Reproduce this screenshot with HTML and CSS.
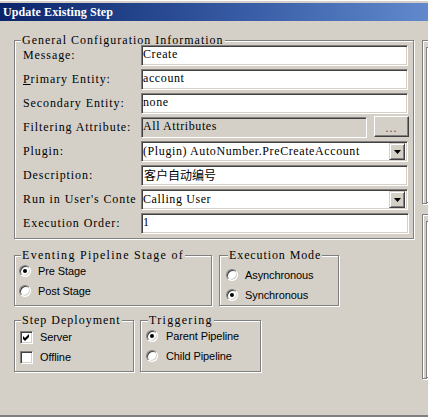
FILE: index.html
```html
<!DOCTYPE html>
<html>
<head>
<meta charset="utf-8">
<title>Update Existing Step</title>
<link rel="stylesheet" href="styles.css">
</head>
<body>
<div class="window">
  <div class="titlebar">Update Existing Step</div>
  <div class="main">
    <div class="left">
      <fieldset class="group general">
        <legend>General Configuration Information</legend>
        <div class="form">
          <div class="row"><div class="label">Message:</div><div class="field">Create</div></div>
          <div class="row"><div class="label"><span class="u">P</span>rimary Entity:</div><div class="field">account</div></div>
          <div class="row"><div class="label">Secondary Entity:</div><div class="field">none</div></div>
          <div class="row"><div class="label">Filtering Attribute:</div>
            <div class="field-pair"><div class="field disabled">All Attributes</div><div class="btn">...</div></div>
          </div>
          <div class="row"><div class="label">Plugin:</div>
            <div class="field combo"><span class="combo-text">(Plugin) AutoNumber.PreCreateAccount</span><span class="drop"><svg width="7" height="4" viewBox="0 0 7 4"><polygon points="0,0 7,0 3.5,4" fill="#000"/></svg></span></div>
          </div>
          <div class="row"><div class="label">Description:</div><div class="field cjk">客户自动编号</div></div>
          <div class="row"><div class="label">Run in User's Conte</div>
            <div class="field combo"><span class="combo-text">Calling User</span><span class="drop"><svg width="7" height="4" viewBox="0 0 7 4"><polygon points="0,0 7,0 3.5,4" fill="#000"/></svg></span></div>
          </div>
          <div class="row"><div class="label">Execution Order:</div><div class="field wide">1</div></div>
        </div>
      </fieldset>

      <div class="group-row first">
        <fieldset class="group stage">
          <legend>Eventing Pipeline Stage of</legend>
          <div class="opt"><span class="radio checked"></span><span>Pre Stage</span></div>
          <div class="opt"><span class="radio"></span><span>Post Stage</span></div>
        </fieldset>
        <fieldset class="group mode">
          <legend>Execution Mode</legend>
          <div class="opt"><span class="radio"></span><span>Asynchronous</span></div>
          <div class="opt"><span class="radio checked"></span><span>Synchronous</span></div>
        </fieldset>
      </div>

      <div class="group-row second">
        <fieldset class="group deploy">
          <legend>Step Deployment</legend>
          <div class="opt"><span class="check"><svg width="7" height="7" viewBox="0 0 7 7"><path d="M0 2 L2 4 L6 0 L6 3 L2 7 L0 5 Z" fill="#000"/></svg></span><span>Server</span></div>
          <div class="opt"><span class="check"></span><span>Offline</span></div>
        </fieldset>
        <fieldset class="group trig">
          <legend>Triggering</legend>
          <div class="opt"><span class="radio checked"></span><span>Parent Pipeline</span></div>
          <div class="opt"><span class="radio"></span><span>Child Pipeline</span></div>
        </fieldset>
      </div>
    </div>
    <div class="right">
      <div class="panel p1"><div class="panel-inner"></div></div>
      <div class="panel p2"><div class="panel-inner"></div></div>
    </div>
  </div>
  <div class="footer"></div>
</div>
</body>
</html>
```
FILE: styles.css
```css
* { box-sizing: border-box; }
html, body { margin: 0; padding: 0; }
body {
  width: 428px;
  height: 417px;
  overflow: hidden;
  background: #d4d0c8;
  font-family: "Liberation Serif", "Times New Roman", serif;
  font-size: 12px;
  letter-spacing: 1px;
  color: #000;
}
.window {
  height: 417px;
  display: flex;
  flex-direction: column;
  border-top: 1px solid #fff;
  padding-top: 2px;
}
.titlebar {
  flex: none;
  height: 18px;
  line-height: 18px;
  padding-left: 3px;
  background: linear-gradient(to right, #0a246a 0%, #3a5fa8 60%, #6189cc 100%);
  color: #fff;
  font-weight: bold;
  font-size: 12px;
  letter-spacing: 0.1px;
  white-space: nowrap;
}
.main {
  flex: 1;
  display: flex;
  gap: 8px;
  padding: 13px 0 0 14px;
  overflow: hidden;
}
.left {
  flex: none;
  width: 400px;
  display: flex;
  flex-direction: column;
}
.group {
  margin: 0;
  min-width: 0;
  border: 1px solid #808080;
  box-shadow: inset 1px 1px #fff, 1px 1px #fff;
}
.group legend {
  margin-left: -2px;
  padding: 0 1px;
  line-height: 12px;
  background: #d4d0c8;
  white-space: nowrap;
}
.general {
  width: 400px;
  padding: 0 5px 4px 8px;
}
.form {
  display: flex;
  flex-direction: column;
  gap: 3px;
  margin-top: -1px;
}
.row {
  display: flex;
  height: 21px;
}
.label {
  flex: none;
  width: 118px;
  line-height: 21px;
  white-space: nowrap;
  overflow: hidden;
  letter-spacing: 0.9px;
}
.u { text-decoration: underline; }
.field {
  flex: 1;
  height: 21px;
  line-height: 17px;
  padding-left: 1px;
  background: #fff;
  border: 1px solid;
  border-color: #808080 #fff #fff #808080;
  box-shadow: inset 1px 1px #404040, inset -1px -1px #d4d0c8;
  white-space: nowrap;
  overflow: hidden;
  letter-spacing: 0.6px;
}
.field.wide { margin-right: -1px; }
.field.cjk {
  font-family: "Noto Sans CJK SC", sans-serif;
  letter-spacing: 0;
  padding-left: 2px;
}
.field-pair {
  flex: 1;
  display: flex;
  gap: 7px;
}
.field.disabled {
  flex: none;
  width: 226px;
  background: #d4d0c8;
}
.btn {
  flex: 1;
  margin-right: -1px;
  margin-top: -1px;
  height: 21px;
  border: 1px solid;
  border-color: #fff #404040 #404040 #fff;
  box-shadow: inset -1px -1px #808080;
  text-align: center;
  line-height: 22px;
  color: #555;
  letter-spacing: 1px;
}
.combo {
  display: flex;
  align-items: center;
  padding-right: 2px;
}
.combo-text { flex: 1; overflow: hidden; }
.drop {
  flex: none;
  width: 16px;
  height: 17px;
  display: flex;
  align-items: center;
  justify-content: center;
  background: #d4d0c8;
  border: 1px solid;
  border-color: #d4d0c8 #404040 #404040 #d4d0c8;
  box-shadow: inset 1px 1px #fff, inset -1px -1px #808080;
}
.group-row {
  display: flex;
}
.group-row.first { margin-top: 10px; gap: 7px; }
.group-row.second { margin-top: 8px; gap: 6px; }
.opt {
  display: flex;
  align-items: center;
  height: 20px;
  font-family: "Liberation Sans", Arial, sans-serif;
  font-size: 11px;
  letter-spacing: -0.1px;
  white-space: nowrap;
}
.stage { width: 198px; padding: 0 0 3px 4px; }
.stage legend { margin-left: 2px; letter-spacing: 1.3px; }
.mode { width: 120px; padding: 4px 0 0 6px; }
.mode legend { margin-left: 2px; letter-spacing: 0.9px; }
.deploy { width: 120px; padding: 1px 0 4px 5px; }
.deploy legend { margin-left: 1px; }
.trig { width: 121px; padding: 0 0 4px 5px; }
.trig legend { margin-left: 2px; letter-spacing: 1.3px; }
.radio {
  flex: none;
  position: relative;
  width: 12px;
  height: 12px;
  margin-right: 7px;
  border-radius: 50%;
  background: #fff;
  border: 1px solid;
  border-color: #808080 #fff #fff #808080;
  box-shadow: inset 1px 1px #404040, inset -1px -1px #d4d0c8;
}
.radio.checked::after {
  content: "";
  position: absolute;
  left: 3px;
  top: 3px;
  width: 4px;
  height: 4px;
  border-radius: 50%;
  background: #000;
}
.trig .radio { margin-right: 8px; }
.check {
  flex: none;
  width: 13px;
  height: 13px;
  margin-right: 7px;
  display: flex;
  align-items: center;
  justify-content: center;
  background: #fff;
  border: 1px solid;
  border-color: #808080 #fff #fff #808080;
  box-shadow: inset 1px 1px #404040, inset -1px -1px #d4d0c8;
}
.right {
  flex: 1;
  display: flex;
  flex-direction: column;
}
.panel {
  width: 40px;
  border: 1px solid #808080;
  box-shadow: inset 1px 1px #fff, 1px 1px #fff;
  padding: 6px 0 0 3px;
}
.p1 { margin-top: 6px; height: 164px; }
.p2 { margin-top: 10px; height: 165px; }
.panel-inner {
  height: 100%;
  border: 1px solid #808080;
  box-shadow: inset 1px 1px #fff, 1px 1px #fff;
}
.footer {
  flex: none;
  height: 2px;
  background: #808080;
}
```
